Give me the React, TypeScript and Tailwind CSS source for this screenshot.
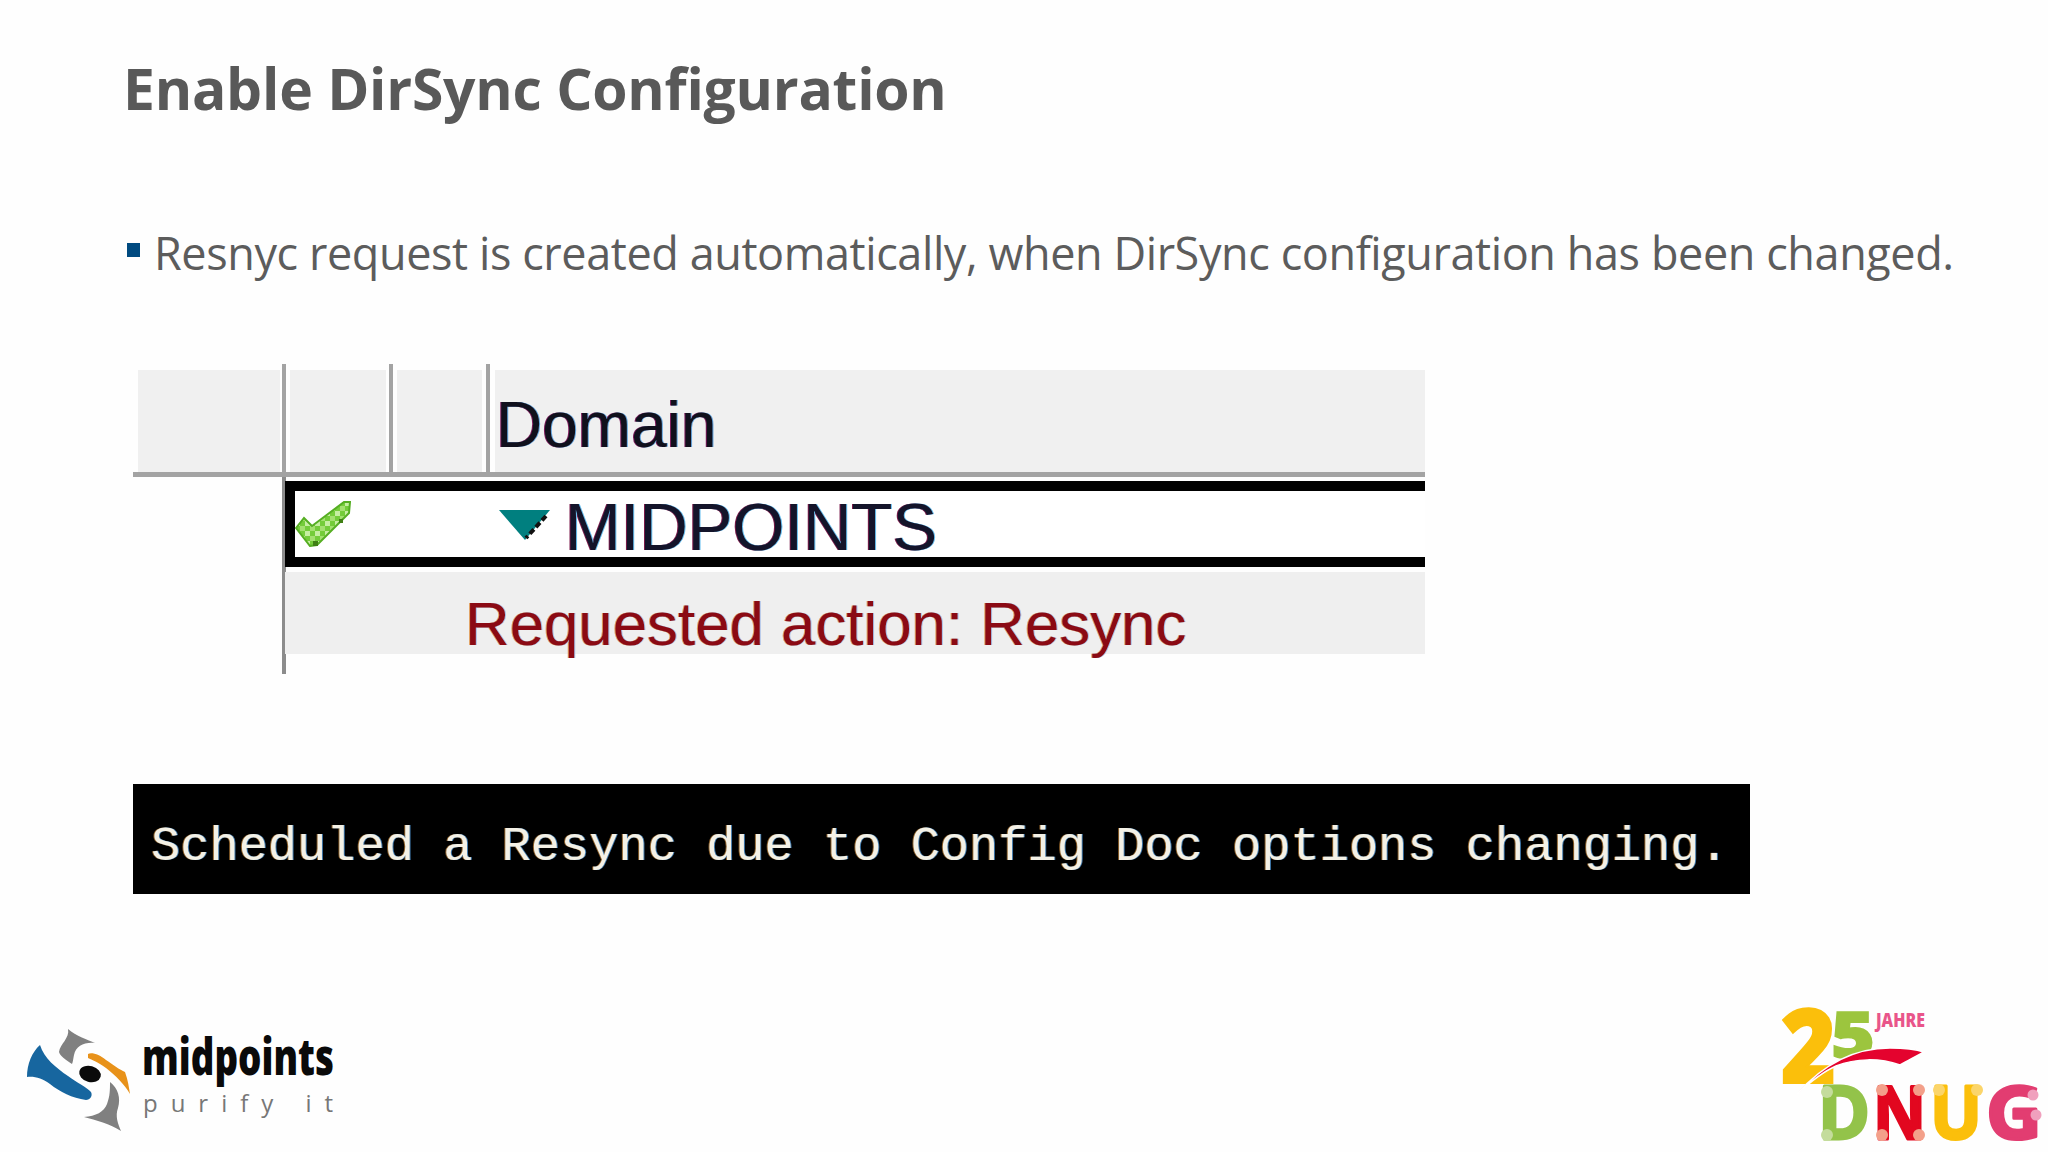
export default function App() {
  return (
    <div className="w-[2048px] h-[1152px] bg-[#fefefe] overflow-hidden flex flex-col font-['Open_Sans',sans-serif]">
      <h1 className="ml-[123px] mt-[55px] h-[66px] text-[57px] leading-[66px] tracking-[-0.23px] font-bold text-[#595959] whitespace-nowrap">
        Enable DirSync Configuration
      </h1>
      <div className="ml-[127px] mt-[101px] h-[62px] flex items-start whitespace-nowrap">
        <div className="w-[13px] h-[14px] mt-[21px] bg-[#004a80]"></div>
        <p className="ml-[14px] text-[45px] leading-[62px] tracking-[-0.41px] text-[#5c5c5c]">
          Resnyc request is created automatically, when DirSync configuration has been changed.
        </p>
      </div>

      <DomainTable />

      <div className="ml-[133px] mt-[110px] w-[1617px] h-[110px] bg-black flex items-center pl-[18px] pt-[16px]">
        <span className="font-['Liberation_Mono',monospace] text-[48.7px] leading-none text-[#f4f1e6] whitespace-nowrap [text-shadow:1px_0_0_#3f76a8,-1px_0_0_#8a5f2a]">
          Scheduled a Resync due to Config Doc options changing.
        </span>
      </div>

      <div className="mt-auto flex justify-between items-end">
        <MidpointsLogo />
        <DnugLogo />
      </div>
    </div>
  );
}

function DomainTable() {
  return (
    <div className="ml-[133px] mt-[80px] w-[1292px] font-['Liberation_Sans',sans-serif]">
      <div className="flex h-[108px]">
        <div className="w-[142px] ml-[5px] mt-[6px] bg-[#f0f0f0]"></div>
        <div className="w-[4px] ml-[2px] bg-[#a3a3a3]"></div>
        <div className="w-[96px] ml-[4px] mt-[6px] bg-[#f0f0f0]"></div>
        <div className="w-[4px] ml-[3px] bg-[#a3a3a3]"></div>
        <div className="w-[85px] ml-[4px] mt-[6px] bg-[#f0f0f0]"></div>
        <div className="w-[4px] ml-[4px] bg-[#a3a3a3]"></div>
        <div className="flex-1 ml-[5px] mt-[6px] bg-[#f0f0f0] pl-[1px] pt-[18px]">
          <span className="text-[64px] leading-[74px] text-[#10101c] [text-shadow:1px_0_0_#6aa8e0,-1px_0_0_#7a1a5a]">Domain</span>
        </div>
      </div>
      <div className="h-[5px] bg-[#a3a3a3]"></div>

      <div className="flex">
        <div className="w-[149px]"></div>
        <div className="w-[4px] h-[197px] bg-[#8c8c8c]"></div>
        <div className="flex-1 ml-[-1px]">
          <div className="mt-[4px] h-[86px] border-y-[10px] border-l-[10px] border-black bg-white flex items-center">
            <CheckIcon />
            <TriangleIcon />
            <span className="ml-[15px] pt-[6px] text-[67px] leading-[66px] text-[#14142a] whitespace-nowrap [text-shadow:1px_0_0_#6ac0f0,-1px_0_0_#7a1a4a]">MIDPOINTS</span>
          </div>
          <div className="mt-[5px] h-[82px] bg-[#efefef] pl-[180px] pt-[12px]">
            <span className="text-[61.8px] leading-[80px] text-[#8b0a14] whitespace-nowrap [text-shadow:1px_0_0_#a8c0e8,-1px_0_0_#e0a060]">Requested action: Resync</span>
          </div>
        </div>
      </div>
    </div>
  );
}

function CheckIcon() {
  return (
    <svg width="56" height="46" viewBox="0 0 56 46" className="shrink-0">
      <defs>
        <pattern id="checker" width="10" height="10" patternUnits="userSpaceOnUse">
          <rect width="10" height="10" fill="#74cc3a" />
          <rect width="5" height="5" fill="#c6eea2" />
          <rect x="5" y="5" width="5" height="5" fill="#a4e070" />
        </pattern>
      </defs>
      <polygon points="1,27 9,17 17,25 49,1 55,1 54,12 22,44 15,45" fill="url(#checker)" stroke="#55ae22" strokeWidth="2" />
      <g fill="#3f7f14">
        <rect x="18" y="40" width="5" height="5" />
        <rect x="44" y="18" width="4" height="4" />
      </g>
    </svg>
  );
}

function TriangleIcon() {
  return (
    <svg width="51" height="30" viewBox="0 0 51 30" className="shrink-0 ml-[148px] mt-[2px]">
      <polygon points="0,0 51,0 26,30" fill="#007f7f" />
      <path d="M47 6 L27 28" stroke="#111" strokeWidth="4" strokeDasharray="6 3" fill="none" />
    </svg>
  );
}

function MidpointsLogo() {
  return (
    <svg width="370" height="152" viewBox="0 0 370 152" className="shrink-0">
      <path d="M40 45 C44 58 56 68 68 76 C76 82 88 88 91 92 C93 96 90 100 86 100 C72 98 60 92 50 84 C42 78 34 76 27 77 C27 64 32 52 40 45Z" fill="#17669f" />
      <path d="M68 29 C76 36 88 40 95 43 C84 42 76 46 74 55 C73 60 73 62 72 64 C66 60 60 56 59 52 C60 44 70 38 68 29Z" fill="#808080" />
      <path d="M88 54 C92 52 100 55 106 60 C112 64 120 70 125 72 C128 80 129 88 130 94 C124 84 116 76 106 68 C98 62 92 60 88 58Z" fill="#e8921a" />
      <path d="M110 82 C118 88 121 98 118 108 C115 116 118 124 121 131 C110 124 96 120 84 117 C96 116 104 112 107 104 C110 96 110 90 110 82Z" fill="#808080" />
      <ellipse cx="90" cy="74" rx="11" ry="8" transform="rotate(15 90 74)" fill="#0a0a0a" />
      <text x="142" y="75" fontSize="52" fontWeight="800" fill="#0a0a0a" textLength="192" lengthAdjust="spacingAndGlyphs" fontFamily="Open Sans, sans-serif">midpoints</text>
      <text x="143" y="112" fontSize="24" fontWeight="400" fill="#777777" textLength="190" lengthAdjust="spacing" fontFamily="Open Sans, sans-serif">purify it</text>
    </svg>
  );
}

function DnugLogo() {
  return (
    <svg width="288" height="162" viewBox="0 0 288 162" className="shrink-0">
      <text x="21" y="93" fontSize="102" fontWeight="800" fill="#fbbf0b" stroke="#fbbf0b" strokeWidth="2" textLength="55" lengthAdjust="spacingAndGlyphs" fontFamily="Open Sans, sans-serif">2</text>
      <text x="71" y="68" fontSize="64" fontWeight="800" fill="#9cc53e" stroke="#9cc53e" strokeWidth="1.5" textLength="44" lengthAdjust="spacingAndGlyphs" fontFamily="Open Sans, sans-serif">5</text>
      <text x="116" y="37" fontSize="19" fontWeight="800" fill="#e9558a" textLength="49" lengthAdjust="spacingAndGlyphs" fontFamily="Open Sans, sans-serif">JAHRE</text>
      <path d="M37 104 C60 78 90 58 130 58 C142 58 155 59 164 62 C156 66 148 71 140 75 C120 68 96 68 76 76 C62 82 48 94 37 104Z" fill="#e4032e" stroke="#fff" strokeWidth="1.5" />
      <g fontFamily="Open Sans, sans-serif" fontWeight="700" fontSize="74" strokeWidth="3" strokeLinejoin="round">
        <text x="58" y="149" fill="#93c34a" stroke="#93c34a" textLength="52" lengthAdjust="spacingAndGlyphs">D</text>
        <text x="113" y="149" fill="#e2071f" stroke="#e2071f" textLength="53" lengthAdjust="spacingAndGlyphs">N</text>
        <text x="170" y="149" fill="#fbbf0b" stroke="#fbbf0b" textLength="52" lengthAdjust="spacingAndGlyphs">U</text>
        <text x="226" y="149" fill="#e23d71" stroke="#e23d71" textLength="56" lengthAdjust="spacingAndGlyphs">G</text>
      </g>
      <g fill="#c4dc9c">
        <circle cx="67" cy="102" r="6" />
        <circle cx="67" cy="145" r="6" />
      </g>
      <g fill="#f3a08a">
        <circle cx="122" cy="100" r="6" />
        <circle cx="122" cy="145" r="6" />
        <circle cx="159" cy="100" r="6" />
        <circle cx="159" cy="145" r="6" />
      </g>
      <g fill="#fbd56a">
        <circle cx="179" cy="100" r="6" />
        <circle cx="217" cy="100" r="6" />
      </g>
      <g fill="#f0a0bd">
        <circle cx="273" cy="105" r="5.5" />
        <circle cx="276" cy="125" r="5.5" />
      </g>
    </svg>
  );
}
